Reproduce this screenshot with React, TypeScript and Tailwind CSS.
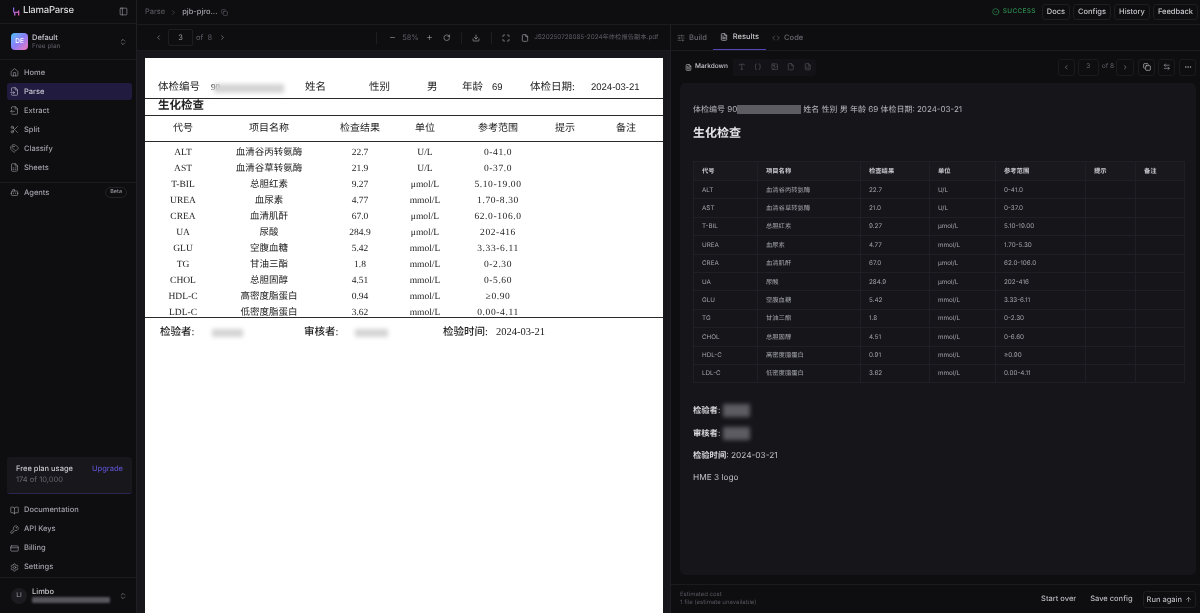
import {
  ArrowLeftRight,
  ArrowUp,
  BookOpen,
  Bot,
  Braces,
  ChevronLeft,
  ChevronRight,
  ChevronsUpDown,
  CircleCheck,
  Code,
  Copy,
  CreditCard,
  Download,
  Ellipsis,
  File,
  FileInput,
  FileOutput,
  FileSpreadsheet,
  FileText,
  House,
  Image,
  KeyRound,
  Maximize,
  Minus,
  PanelLeft,
  Plus,
  RotateCw,
  Scissors,
  Settings,
  SlidersHorizontal,
  Tags,
  Type,
} from "lucide-react"

const cjk = "font-['Inter','Noto_Sans_CJK_SC',sans-serif]"
const serif = "font-['Liberation_Serif','Noto_Sans_CJK_SC',serif]"

const mainNav = [
  { label: "Home", icon: House },
  { label: "Parse", icon: FileInput, active: true },
  { label: "Extract", icon: FileOutput },
  { label: "Split", icon: Scissors },
  { label: "Classify", icon: Tags },
  { label: "Sheets", icon: FileSpreadsheet },
]

const bottomNav = [
  { label: "Documentation", icon: BookOpen },
  { label: "API Keys", icon: KeyRound },
  { label: "Billing", icon: CreditCard },
  { label: "Settings", icon: Settings },
]

const scanRows = [
  ["ALT", "血清谷丙转氨酶", "22.7", "U/L", "0-41.0"],
  ["AST", "血清谷草转氨酶", "21.9", "U/L", "0-37.0"],
  ["T-BIL", "总胆红素", "9.27", "μmol/L", "5.10-19.00"],
  ["UREA", "血尿素", "4.77", "mmol/L", "1.70-8.30"],
  ["CREA", "血清肌酐", "67.0", "μmol/L", "62.0-106.0"],
  ["UA", "尿酸", "284.9", "μmol/L", "202-416"],
  ["GLU", "空腹血糖", "5.42", "mmol/L", "3.33-6.11"],
  ["TG", "甘油三酯", "1.8", "mmol/L", "0-2.30"],
  ["CHOL", "总胆固醇", "4.51", "mmol/L", "0-5.60"],
  ["HDL-C", "高密度脂蛋白", "0.94", "mmol/L", "≥0.90"],
  ["LDL-C", "低密度脂蛋白", "3.62", "mmol/L", "0.00-4.11"],
]

const resultRows = [
  ["ALT", "血清谷丙转氨酶", "22.7", "U/L", "0-41.0"],
  ["AST", "血清谷草转氨酶", "21.0", "U/L", "0-37.0"],
  ["T-BIL", "总胆红素", "9.27", "μmol/L", "5.10-19.00"],
  ["UREA", "血尿素", "4.77", "mmol/L", "1.70-5.30"],
  ["CREA", "血清肌酐", "67.0", "μmol/L", "62.0-106.0"],
  ["UA", "尿酸", "284.9", "μmol/L", "202-416"],
  ["GLU", "空腹血糖", "5.42", "mmol/L", "3.33-6.11"],
  ["TG", "甘油三酯", "1.8", "mmol/L", "0-2.30"],
  ["CHOL", "总胆固醇", "4.51", "mmol/L", "0-6.60"],
  ["HDL-C", "高密度脂蛋白", "0.91", "mmol/L", "≥0.90"],
  ["LDL-C", "低密度脂蛋白", "3.62", "mmol/L", "0.00-4.11"],
]

const resultHead = ["代号", "项目名称", "检查结果", "单位", "参考范围", "提示", "备注"]

function NavItem({ label, icon: Icon, active }: { label: string; icon: typeof House; active?: boolean }) {
  return (
    <div
      className={`flex h-[17px] items-center gap-[5px] rounded-[3px] px-[3px] text-[7.5px] font-medium ${
        active ? "bg-[#211c3f] text-[#c9c8d2]" : "text-[#a3a3ab]"
      }`}
    >
      <Icon className="h-[9px] w-[9px]" strokeWidth={1.6} />
      <span>{label}</span>
    </div>
  )
}

function Sidebar() {
  return (
    <aside className="flex h-full w-[137px] shrink-0 flex-col border-r border-[#1e1e23] bg-[#0e0e11]">
      <div className="flex h-[24px] items-center justify-between border-b border-[#1a1a1f] pl-[12px] pr-[8px]">
        <div className="flex items-center gap-[3px]">
          <svg width="8" height="9" viewBox="0 0 8 9">
            <path d="M1 0.5h1.2v4.2h3.4l0.7-1.4h1v5.2H6V6H3.4v2.5H2V6L1 5z" fill="url(#llama)" />
            <defs>
              <linearGradient id="llama" x1="0" y1="0" x2="1" y2="1">
                <stop offset="0" stopColor="#7c6cf0" />
                <stop offset="1" stopColor="#e85aa8" />
              </linearGradient>
            </defs>
          </svg>
          <span className="text-[9.5px] font-medium tracking-[-0.2px] text-[#d8d8dc]">LlamaParse</span>
        </div>
        <PanelLeft className="h-[9px] w-[9px] text-[#a3a3ab]" strokeWidth={1.6} />
      </div>

      <div className="flex h-[36px] items-center justify-between border-b border-[#1a1a1f] pl-[11px] pr-[9px]">
        <div className="flex items-center gap-[4px]">
          <div className="flex h-[17px] w-[17px] items-center justify-center rounded-[4px] bg-gradient-to-br from-[#38bdf8] via-[#8b7cf6] to-[#f472b6] text-[6.5px] font-medium text-white">
            DE
          </div>
          <div className="leading-none">
            <div className="text-[7.5px] font-medium text-[#c9c9cf]">Default</div>
            <div className="mt-[2px] text-[6.5px] text-[#5f5f68]">Free plan</div>
          </div>
        </div>
        <ChevronsUpDown className="h-[8px] w-[8px] text-[#a3a3ab]" strokeWidth={1.6} />
      </div>

      <nav className="flex flex-col gap-[2px] border-b border-[#1a1a1f] pb-[6px] pl-[7px] pr-[4px] pt-[4px]">
        {mainNav.map((item) => (
          <NavItem key={item.label} {...item} />
        ))}
      </nav>

      <div className="mt-[1px] flex items-center justify-between pl-[7px] pr-[9px]">
        <NavItem label="Agents" icon={Bot} />
        <span className="rounded-full border border-[#222228] px-[4px] py-[1px] text-[5.5px] leading-[7px] text-[#a3a3ab]">
          Beta
        </span>
      </div>

      <div className="mt-auto pl-[7px] pr-[4px]">
        <div className="flex h-[37px] justify-between rounded-[3px] border-b border-[#2a2650] bg-[#17171c] px-[9px] pt-[8px]">
          <div className="leading-none">
            <div className="text-[7.5px] font-medium text-[#c9c9cf]">Free plan usage</div>
            <div className="mt-[4px] text-[7.5px] text-[#68686f]">174 of 10,000</div>
          </div>
          <span className="text-[7.5px] font-medium leading-none text-[#5b4fc4]">Upgrade</span>
        </div>
      </div>

      <nav className="mt-[8px] flex flex-col gap-[2px] border-b border-[#1a1a1f] pb-[1.5px] pl-[7px] pr-[4px]">
        {bottomNav.map((item) => (
          <NavItem key={item.label} {...item} />
        ))}
      </nav>

      <div className="flex h-[35px] items-center justify-between pl-[11px] pr-[9px]">
        <div className="flex items-center gap-[5px]">
          <div className="flex h-[16px] w-[16px] items-center justify-center rounded-full bg-[#1b1b20] text-[6.5px] text-[#a3a3ab]">
            LI
          </div>
          <div className="leading-none">
            <div className="text-[7.5px] font-medium text-[#c9c9cf]">Limbo</div>
            <div className="mt-[2px] h-[6px] w-[78px] rounded-[1px] bg-[#55555c] blur-[1px]" />
          </div>
        </div>
        <ChevronsUpDown className="h-[8px] w-[8px] text-[#a3a3ab]" strokeWidth={1.6} />
      </div>
    </aside>
  )
}

function TopBar() {
  return (
    <header className="flex h-[25px] shrink-0 items-center justify-between border-b border-[#1a1a1f] pl-[8px] pr-[2px]">
      <div className="flex items-center text-[7.5px]">
        <span className="text-[#5f5f68]">Parse</span>
        <ChevronRight className="mx-[5px] h-[7px] w-[7px] text-[#5f5f68]" />
        <span className="font-medium text-[#a3a3ab]">pjb-pjro...</span>
        <Copy className="ml-[4px] h-[7px] w-[7px] text-[#5f5f68]" />
      </div>
      <div className="flex items-center text-[7.5px] font-medium text-[#c9c9cf]">
        <CircleCheck className="h-[7.5px] w-[7.5px] text-[#2f8f52]" />
        <span className="ml-[3px] mr-[6px] text-[6.5px] tracking-[0.3px] text-[#2f8f52]">SUCCESS</span>
        <span className="rounded-[3px] border border-[#1d1d22] px-[4px] py-[3px] leading-[8px]">Docs</span>
        <span className="ml-[3px] rounded-[3px] border border-[#1d1d22] px-[4px] py-[3px] leading-[8px]">Configs</span>
        <span className="ml-[3px] rounded-[3px] border border-[#1d1d22] px-[4px] py-[3px] leading-[8px]">History</span>
        <span className="ml-[3px] rounded-[3px] border border-[#1d1d22] px-[4px] py-[3px] leading-[8px]">Feedback</span>
      </div>
    </header>
  )
}

function ViewerToolbar() {
  return (
    <div className="flex h-[26px] shrink-0 items-center border-b border-[#1a1a1f] pl-[18px] text-[#a3a3ab]">
      <ChevronLeft className="h-[7px] w-[7px]" />
      <div className="ml-[6px] flex h-[17px] w-[25px] items-center justify-center rounded-[2px] border border-[#1d1d22] text-[7.5px]">
        3
      </div>
      <span className="ml-[3px] text-[7.5px] text-[#5f5f68]">of&nbsp;&nbsp;8</span>
      <ChevronRight className="ml-[7px] h-[7px] w-[7px]" />
      <div className="ml-[150px] h-[12px] w-px bg-[#1d1d22]" />
      <Minus className="ml-[12px] h-[7px] w-[7px]" />
      <span className="ml-[6px] text-[7.5px] text-[#5f5f68]">58%</span>
      <Plus className="ml-[7px] h-[7px] w-[7px]" />
      <RotateCw className="ml-[10px] h-[7.5px] w-[7.5px]" />
      <div className="ml-[11px] h-[12px] w-px bg-[#1d1d22]" />
      <Download className="ml-[10px] h-[8px] w-[8px]" />
      <div className="ml-[11px] h-[12px] w-px bg-[#1d1d22]" />
      <Maximize className="ml-[10px] h-[8px] w-[8px]" />
      <File className="ml-[11px] h-[8px] w-[8px]" />
      <span className={`ml-[5px] whitespace-nowrap text-[6.3px] text-[#5f5f68] ${cjk}`}>
        JS20250728085-2024年体检报告副本.pdf
      </span>
    </div>
  )
}

function Rule() {
  return <div className="h-px bg-[#2a2a2a]" />
}

function ScanPage() {
  return (
    <div className={`h-full w-[518px] overflow-hidden bg-white pt-[20px] text-[#222222] ${serif}`}>
      <div className="flex h-[20px] items-center pl-[13px] text-[10.5px]">
        <span className="w-[53px]">体检编号</span>
        <span className="text-[9px]">90</span>
        <span className="ml-[-6px] h-[9px] w-[70px] bg-[#d4d4d4] blur-[2px]" />
        <span className="ml-[21px] w-[64px]">姓名</span>
        <span className="w-[58px]">性别</span>
        <span className="w-[35px]">男</span>
        <span className="w-[30px]">年龄</span>
        <span className="w-[38px] font-['Liberation_Sans'] text-[9.5px]">69</span>
        <span className="w-[61px]">体检日期:</span>
        <span className="font-['Liberation_Sans'] text-[9.5px]">2024-03-21</span>
      </div>
      <Rule />
      <div className="flex h-[16px] items-center pl-[13px] text-[11.5px] font-bold">生化检查</div>
      <Rule />
      <div className="grid h-[25px] grid-cols-[76px_96px_86px_44px_102px_32px_90px] items-center text-center text-[10px]">
        {resultHead.map((h) => (
          <span key={h}>{h}</span>
        ))}
      </div>
      <Rule />
      <div className="h-[175px] pt-[4px]">
        {scanRows.map((row) => (
          <div
            key={row[0]}
            className="grid h-[16px] grid-cols-[76px_96px_86px_44px_102px_32px_90px] items-center text-center text-[9.5px] leading-none"
          >
            {row.map((cell, i) => (
              <span key={i} className={`whitespace-nowrap ${i === 4 ? "tracking-[0.6px]" : ""}`}>
                {cell}
              </span>
            ))}
          </div>
        ))}
      </div>
      <Rule />
      <div className="flex h-[29px] items-center pl-[15px] text-[10.5px] font-medium">
        <span className="w-[52px]">检验者:</span>
        <span className="h-[8px] w-[31px] bg-[#d4d4d4] blur-[2px]" />
        <span className="ml-[61px] w-[51px]">审核者:</span>
        <span className="h-[8px] w-[33px] bg-[#d4d4d4] blur-[2px]" />
        <span className="ml-[55px] w-[53px]">检验时间:</span>
        <span>2024-03-21</span>
      </div>
    </div>
  )
}

function TabsBar() {
  return (
    <div className="flex h-[26px] shrink-0 items-stretch border-b border-[#1a1a1f] pl-[6px] text-[7.5px] font-medium">
      <div className="flex items-center gap-[4px] text-[#68686f]">
        <SlidersHorizontal className="h-[8px] w-[8px]" />
        <span>Build</span>
      </div>
      <div className="ml-[6px] flex items-center gap-[5px] border-b border-[#4f46b8] px-[7px] text-[#c9c9cf]">
        <FileText className="h-[8px] w-[8px]" />
        <span>Results</span>
      </div>
      <div className="ml-[6px] flex items-center gap-[4px] text-[#68686f]">
        <Code className="h-[8px] w-[8px]" />
        <span>Code</span>
      </div>
    </div>
  )
}

function ResultsToolbar() {
  const box = "flex h-[17px] items-center justify-center rounded-[3px] border border-[#1a1a1f]"
  return (
    <div className="flex h-[18px] items-center justify-between text-[#a3a3ab]">
      <div className="flex h-[17px] items-center rounded-[3px] bg-[#131317]">
        <div className="flex h-full items-center gap-[3px] rounded-[3px] bg-[#0e0e11] px-[5px] text-[6.5px] font-medium text-[#c9c9cf]">
          <FileText className="h-[7px] w-[7px]" />
          <span>Markdown</span>
        </div>
        <div className="flex items-center gap-[9px] pl-[5px] pr-[5px] text-[#55555c]">
          <Type className="h-[7.5px] w-[7.5px]" />
          <Braces className="h-[7.5px] w-[7.5px]" />
          <Image className="h-[7.5px] w-[7.5px]" />
          <File className="h-[7.5px] w-[7.5px]" />
          <FileSpreadsheet className="h-[7.5px] w-[7.5px]" />
        </div>
      </div>
      <div className="flex items-center">
        <div className={`${box} w-[17px]`}>
          <ChevronLeft className="h-[6.5px] w-[6.5px]" />
        </div>
        <div className={`${box} ml-[3px] w-[21px] text-[6.5px] text-[#5f5f68]`}>3</div>
        <span className="ml-[3px] text-[6.5px] text-[#5f5f68]">of 8</span>
        <div className={`${box} ml-[2px] w-[18px]`}>
          <ChevronRight className="h-[6.5px] w-[6.5px]" />
        </div>
        <div className={`${box} ml-[4px] w-[17px]`}>
          <Copy className="h-[8px] w-[8px] text-[#c9c9cf]" />
        </div>
        <div className={`${box} ml-[3px] w-[17px]`}>
          <ArrowLeftRight className="h-[7.5px] w-[7.5px]" />
        </div>
        <div className={`${box} ml-[4px] w-[17px]`}>
          <Ellipsis className="h-[8px] w-[8px]" />
        </div>
      </div>
    </div>
  )
}

function ResultsCard() {
  return (
    <div className={`mt-[7px] h-[492px] rounded-[5px] bg-[#15151a] pl-[13px] pr-[4px] pt-[20px] ${cjk}`}>
      <p className="flex items-center text-[8px] leading-[13px] text-[#b9b9c0]">
        <span>体检编号 90</span>
        <span className="h-[9px] w-[64px] bg-[#5c5c62] blur-[0.5px]" />
        <span className="ml-[2px]">姓名 性别 男 年龄 69 体检日期: 2024-03-21</span>
      </p>
      <h2 className="mt-[8px] text-[12px] font-bold leading-[18px] text-[#e4e4e8]">生化检查</h2>

      <table className="mt-[19px] w-[491px] table-fixed border-collapse border border-[#1f1f25] text-left text-[6.3px] leading-none text-[#a3a3ab]">
        <colgroup>
          <col className="w-[64px]" />
          <col className="w-[103px]" />
          <col className="w-[69px]" />
          <col className="w-[66px]" />
          <col className="w-[90px]" />
          <col className="w-[50px]" />
          <col className="w-[49px]" />
        </colgroup>
        <thead>
          <tr className="h-[19px] bg-[#18181d] font-semibold text-[#c9c9cf]">
            {resultHead.map((h) => (
              <th key={h} className="border border-[#1f1f25] px-[8px] font-semibold">
                {h}
              </th>
            ))}
          </tr>
        </thead>
        <tbody>
          {resultRows.map((row) => (
            <tr key={row[0]} className="h-[18.4px]">
              {row.map((cell, i) => (
                <td key={i} className="border border-[#1f1f25] px-[8px]">
                  {cell}
                </td>
              ))}
              <td className="border border-[#1f1f25]" />
              <td className="border border-[#1f1f25]" />
            </tr>
          ))}
        </tbody>
      </table>

      <div className="mt-[21px] space-y-[10px] text-[8.3px] leading-[12px] text-[#c2c2c8]">
        <p className="flex items-center">
          <strong className="font-bold text-[#d8d8dc]">检验者</strong>
          <span>:</span>
          <span className="ml-[3px] h-[13px] w-[27px] bg-[#5c5c62] blur-[2px]" />
        </p>
        <p className="flex items-center">
          <strong className="font-bold text-[#d8d8dc]">审核者</strong>
          <span>:</span>
          <span className="ml-[3px] h-[13px] w-[27px] bg-[#5c5c62] blur-[2px]" />
        </p>
        <p>
          <strong className="font-bold text-[#d8d8dc]">检验时间</strong>: 2024-03-21
        </p>
        <p>HME 3 logo</p>
      </div>
    </div>
  )
}

function ResultsFooter() {
  return (
    <div className="mt-[9px] flex h-[29px] items-center justify-between border-t border-[#1a1a1f] pl-[9px] pr-[4px]">
      <div className="text-[6px] leading-[8px] text-[#55555c]">
        <div>Estimated cost</div>
        <div>1 file (estimate unavailable)</div>
      </div>
      <div className="flex items-center text-[7.5px] font-medium text-[#b9b9c0]">
        <span>Start over</span>
        <span className="ml-[14px]">Save config</span>
        <span className="ml-[10px] flex items-center gap-[3px] rounded-[3px] border border-[#1d1d22] px-[3px] py-[3px] leading-[9px]">
          Run again
          <ArrowUp className="h-[7px] w-[7px]" />
        </span>
      </div>
    </div>
  )
}

export default function App() {
  return (
    <div className="flex h-[613px] w-[1200px] overflow-hidden bg-[#0e0e11] font-['Inter',sans-serif] blur-[0.3px] [text-rendering:geometricPrecision]">
      <Sidebar />
      <div className="flex min-w-0 flex-1 flex-col">
        <TopBar />
        <div className="flex min-h-0 flex-1">
          {/* PDF viewer */}
          <section className="flex w-[534px] shrink-0 flex-col border-r border-[#1e1e23]">
            <ViewerToolbar />
            <div className="min-h-0 flex-1 bg-[#17171b] pl-[8px] pt-[7px]">
              <ScanPage />
            </div>
          </section>

          {/* Parsed results */}
          <section className="flex min-w-0 flex-1 flex-col">
            <TabsBar />
            <div className="pl-[9px] pr-[4px] pt-[7px]">
              <ResultsToolbar />
              <ResultsCard />
            </div>
            <ResultsFooter />
          </section>
        </div>
      </div>
    </div>
  )
}
